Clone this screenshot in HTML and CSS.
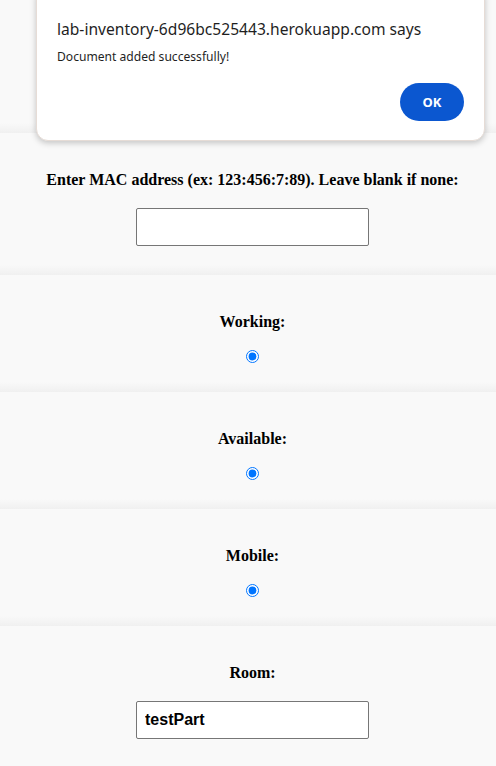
FILE: index.html
```html
<!DOCTYPE html>
<html>
<head>
<meta charset="utf-8">
<link rel="stylesheet" href="styles.css">
</head>
<body>
<main class="form">
  <section class="field field-top"></section>
  <section class="field">
    <label class="field-label" for="mac">Enter MAC address (ex: 123:456:7:89). Leave blank if none:</label>
    <input class="text-input" id="mac" type="text">
  </section>
  <section class="field">
    <label class="field-label">Working:</label>
    <input class="radio" type="radio" name="working" checked>
  </section>
  <section class="field">
    <label class="field-label">Available:</label>
    <input class="radio" type="radio" name="available" checked>
  </section>
  <section class="field">
    <label class="field-label">Mobile:</label>
    <input class="radio" type="radio" name="mobile" checked>
  </section>
  <section class="field field-last">
    <label class="field-label" for="room">Room:</label>
    <input class="text-input" id="room" type="text" value="testPart">
  </section>
</main>

<div class="dialog" role="alertdialog">
  <div class="dialog-title">lab-inventory-6d96bc525443.herokuapp.com says</div>
  <div class="dialog-message">Document added successfully!</div>
  <div class="dialog-actions">
    <button class="dialog-ok">OK</button>
  </div>
</div>
</body>
</html>
```

FILE: styles.css
```css
html, body {
  margin: 0;
  padding: 0;
  background: #f8f8f8;
  overflow: hidden;
}

body {
  width: 496px;
  height: 766px;
  position: relative;
}

.form {
  display: flex;
  flex-direction: column;
}

.field {
  display: flex;
  flex-direction: column;
  align-items: center;
  padding: 38px 0 29px 9px;
  background: linear-gradient(to bottom, #f9f9f9 0, #f9f9f9 calc(100% - 10px), #f0f0f0 100%);
}

.field-top {
  height: 133px;
  padding: 0;
  box-sizing: border-box;
}

.field-last {
  padding-bottom: 60px;
}

.field-label {
  display: block;
  font-family: "Liberation Serif", "Times New Roman", serif;
  font-weight: bold;
  font-size: 16px;
  line-height: 18px;
  height: 18px;
  color: #000;
  margin-bottom: 19px;
  white-space: nowrap;
}

.text-input {
  box-sizing: border-box;
  width: 233px;
  height: 38px;
  margin: 0;
  padding: 0 8px;
  border: 1px solid #767676;
  border-radius: 2px;
  background: #fff;
  font-family: "Liberation Sans", Arial, sans-serif;
  font-weight: bold;
  font-size: 16px;
  color: #000;
}

.radio {
  display: block;
  width: 13px;
  height: 13px;
  margin: 0;
  accent-color: #0075ff;
}

.dialog {
  position: absolute;
  left: 36px;
  top: -14px;
  width: 449px;
  height: 155px;
  box-sizing: border-box;
  background: #fff;
  border: 1px solid #e6dcd6;
  border-radius: 12px;
  box-shadow: 0 2px 6px rgba(0, 0, 0, 0.22);
  padding: 32px 20px 0 20px;
  font-family: "Noto Sans", "Open Sans", sans-serif;
  color: #1f1f1f;
}

.dialog-title {
  font-size: 15.6px;
  line-height: 20px;
  white-space: nowrap;
}

.dialog-message {
  margin-top: 10px;
  font-size: 12.1px;
  line-height: 16px;
  white-space: nowrap;
}

.dialog-actions {
  display: flex;
  justify-content: flex-end;
  margin-top: 18px;
}

.dialog-ok {
  width: 64px;
  height: 38px;
  border: none;
  border-radius: 19px;
  background: #0b57d0;
  color: #fff;
  font-family: "Noto Sans", "Open Sans", sans-serif;
  font-weight: bold;
  font-size: 13px;
  padding: 0;
}
```
